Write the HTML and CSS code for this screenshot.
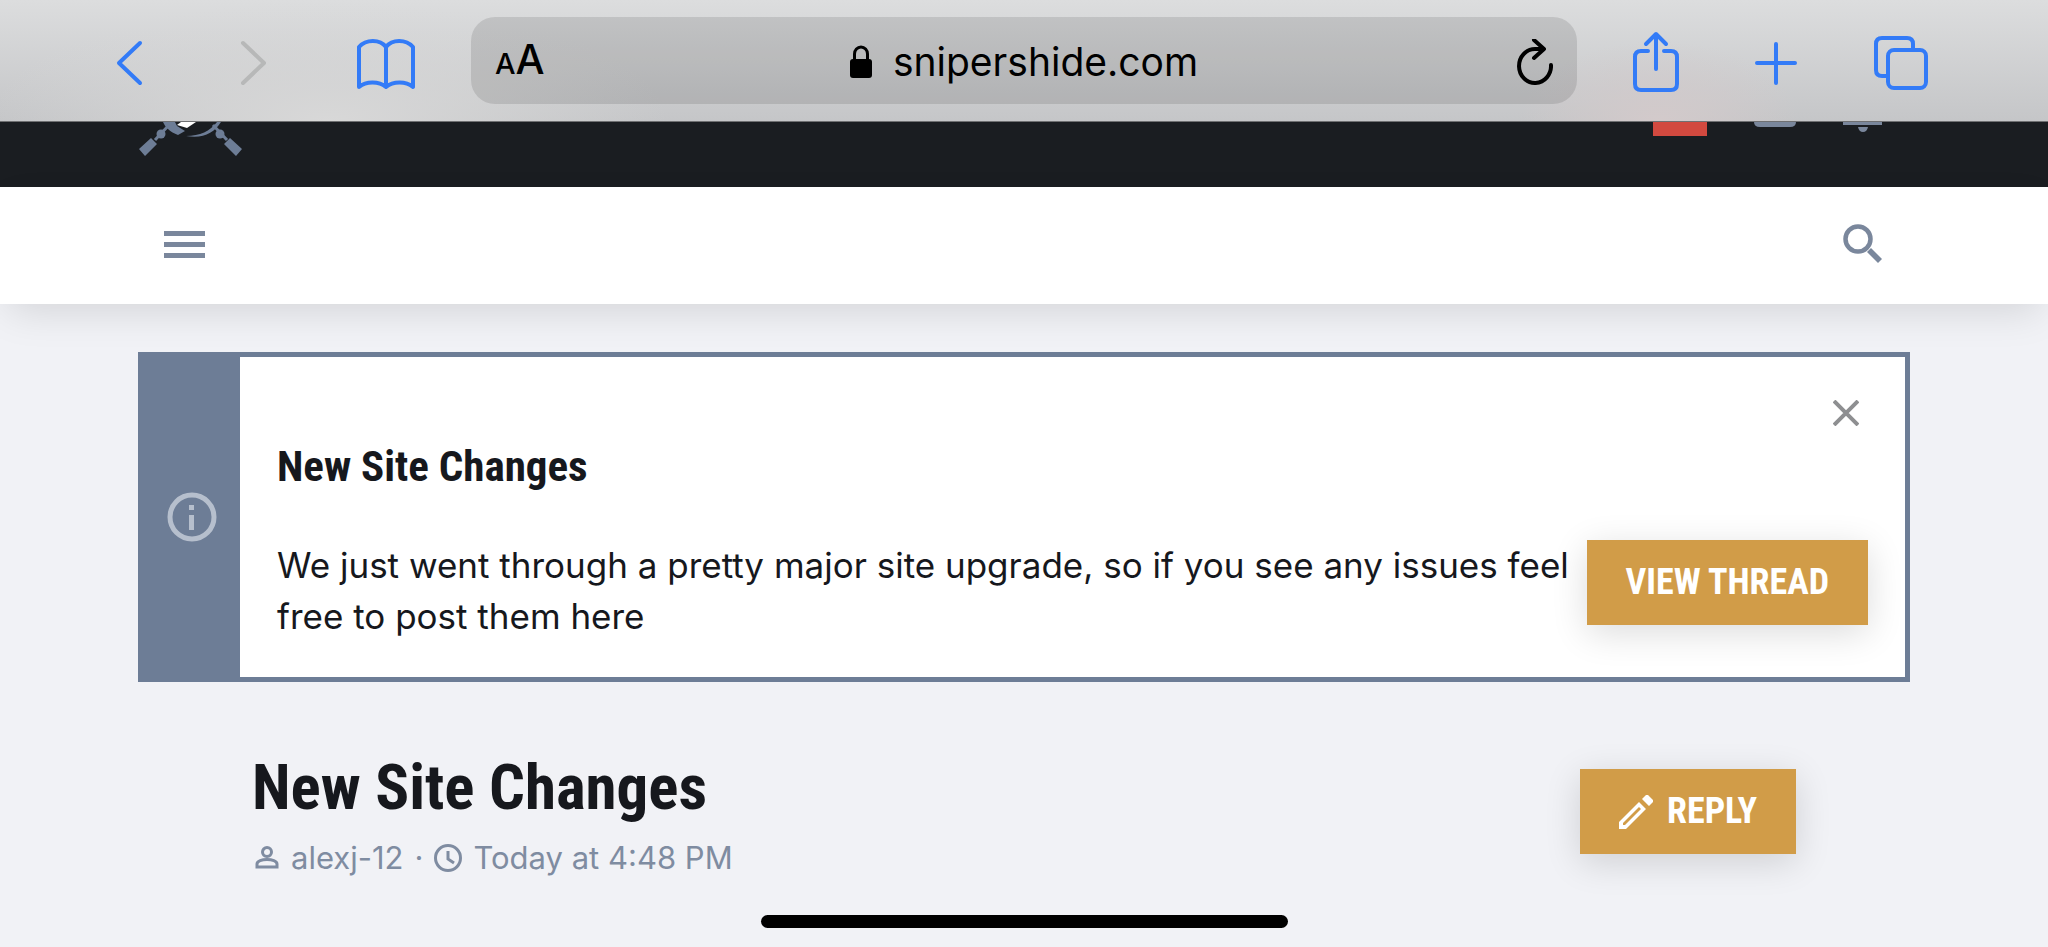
FILE: index.html
```html
<!DOCTYPE html>
<html lang="en">
<head>
	<meta charset="utf-8">
	<meta name="viewport" content="width=device-width, initial-scale=1">
	<title>New Site Changes | Sniper's Hide Forum</title>
	<link rel="stylesheet" href="styles.css">
</head>
<body>
	<!-- Browser toolbar -->
	<div class="toolbar">
		<div class="toolbar-nav">
			<button type="button" class="tool" aria-label="Back">
				<svg width="48" height="64" viewBox="0 0 48 64"><path d="M36 12L15 32l21 20" /></svg>
			</button>
			<button type="button" class="tool" aria-label="Forward" disabled>
				<svg width="48" height="64" viewBox="0 0 48 64"><path d="M13 12l21 20-21 20" /></svg>
			</button>
			<button type="button" class="tool" aria-label="Bookmarks">
				<svg width="60" height="64" viewBox="0 0 60 64"><path d="M30 16v40M30 16c-6-8-20-8-27 0v40c7-6 20-6 27 0c7-6 20-6 27 0V16c-7-8-21-8-27 0z" /></svg>
			</button>
		</div>
		<div class="address">
			<button type="button" class="text-size" aria-label="Text size"><span class="small">A</span><span>A</span></button>
			<label class="url">
				<svg width="22" height="34" viewBox="0 0 22 34" role="img" aria-label="Secure"><rect y="14" width="22" height="19" rx="3" /><path d="M4.500 15V9a6.500 7 0 0 1 13 0v6" fill="none" stroke="#000" stroke-width="3" /></svg>
				<input type="text" value="snipershide.com" aria-label="Address">
			</label>
			<button type="button" class="reload" aria-label="Reload">
				<svg width="36" height="46" viewBox="0 0 36 46"><path d="M34 26a16 17 0 1 1-16-16h8M17 1l10 9-10 9" /></svg>
			</button>
		</div>
		<div class="toolbar-actions">
			<button type="button" class="tool" aria-label="Share">
				<svg width="64" height="64" viewBox="0 0 64 64"><path d="M24 20h-7q-6 0-6 6v27q0 6 6 6h30q6 0 6-6V26q0-6-6-6h-7M32 38V4M22 13L32 3l10 10" /></svg>
			</button>
			<button type="button" class="tool" aria-label="New tab">
				<svg width="64" height="64" viewBox="0 0 64 64"><path d="M30 13v39M11 32h38" /></svg>
			</button>
			<button type="button" class="tool" aria-label="Tabs">
				<svg width="64" height="64" viewBox="0 0 64 64"><path d="M19 45h-5q-6 0-6-6V13q0-6 6-6h25q6 0 6 6v6" /><rect x="20" y="19" width="38" height="38" rx="6" /></svg>
			</button>
		</div>
	</div>

	<!-- Site header, scrolled partly under the toolbar -->
	<header class="header">
		<a href="#" class="logo" aria-label="Sniper's Hide">
			<svg width="104" height="36" viewBox="0 0 104 36">
				<path d="M24 0h12l2 4 8 5-7 4C31 10 26 5 24 0z" />
				<path d="M30 3L16 18M74 3l14 15" stroke="#6d7d96" stroke-width="3" />
				<path d="M82 0C75 11 64 17 47 14c14 0 24-5 31-14z" />
				<circle cx="22" cy="12" r="4.500" /><circle cx="81" cy="12" r="4.500" />
				<path d="M12 16l6 6L6 34l-6-7zM91 16l-6 6 12 12 6-7z" />
				<path d="M38 3l4-3h15l-9 6z" fill="#fff" />
			</svg>
		</a>
		<div class="header-user">
			<a href="#" class="avatar" aria-label="Account"></a>
			<a href="#" aria-label="Inbox"><svg width="42" height="10" viewBox="0 0 42 10"><path d="M0 0h42q0 5-6 5H6q-6 0-6-5z" /></svg></a>
			<a href="#" aria-label="Alerts"><svg width="40" height="10" viewBox="0 0 40 10"><path d="M0 0h39v3H0zM15 5h10q-1 5-5 5t-5-5z" /></svg></a>
		</div>
	</header>

	<nav class="nav">
		<button type="button" class="nav-button" aria-label="Menu">
			<svg width="42" height="43" viewBox="0 0 42 43"><path d="M0 7h41v5H0zM0 18h41v5H0zM0 29h41v5H0z" /></svg>
		</button>
		<button type="button" class="nav-button" aria-label="Search">
			<svg width="42" height="43" viewBox="0 0 42 43"><circle cx="16" cy="15" r="12.500" fill="none" stroke="#7a879c" stroke-width="4.500" /><path d="M25 28l4-4 11 11-4 4z" /></svg>
		</button>
	</nav>

	<main>
		<section class="notice">
			<div class="notice-icon">
				<svg width="50" height="50" viewBox="0 0 50 50"><circle cx="25" cy="25" r="22" fill="none" stroke="#b6bfcd" stroke-width="5" /><path d="M22 13h5v5h-5zM22 23h5v15h-5z" /></svg>
			</div>
			<div class="notice-content">
				<button type="button" class="dismiss" aria-label="Dismiss notice">
					<svg width="26" height="26" viewBox="0 0 26 26"><path d="M1 1l24 24M25 1L1 25" /></svg>
				</button>
				<h3>New Site Changes</h3>
				<div class="notice-row">
					<p>We just went through a pretty major site upgrade, so if you see any issues feel free to post them here</p>
					<a href="#" class="button">VIEW THREAD</a>
				</div>
			</div>
		</section>

		<div class="thread">
			<div class="thread-title">
				<h1>New Site Changes</h1>
				<div class="meta">
					<svg width="28" height="28" viewBox="0 0 28 28"><circle cx="15" cy="8" r="4.500" /><path d="M5 23v-3c0-6 20-6 20 0v3z" /></svg>
					<a href="#">alexj-12</a>
					<span>·</span>
					<svg width="28" height="28" viewBox="0 0 28 28"><circle cx="14" cy="14" r="12.500" /><path d="M14 7v8l6 4" /></svg>
					<a href="#"><time>Today at 4:48 PM</time></a>
				</div>
			</div>
			<a href="#" class="button">
				<svg width="34" height="34" viewBox="0 0 34 34"><path fill-rule="evenodd" d="M0 27v7h7l20-20-7-7zM4 28L20 12l2 2L6 30H4zM23 4l4-4q1-1 2 0l5 5q1 1 0 2l-4 4z" /></svg>
				REPLY
			</a>
		</div>
	</main>

	<div class="home-bar"></div>
</body>
</html>
```

FILE: styles.css
```css
* { box-sizing: border-box; }
body { display: flex; flex-direction: column; min-height: 100vh; margin: 0; background: #f1f2f6; color: #16181d; font: 35px/51px Inter, "Open Sans", sans-serif; }
h1, h3, p { margin: 0; }
h1, h3, .button { font-family: "Roboto Condensed", "Liberation Sans Narrow", Roboto, sans-serif; font-weight: bold; }
a { color: inherit; text-decoration: none; }
button { padding: 0; border: 0; background: none; color: inherit; font: inherit; }
svg { display: block; flex: none; }

/* browser toolbar */
.toolbar { display: flex; align-items: center; height: 122px; padding: 0 116px 0 104px; border-bottom: 1px solid #6f7072; background: radial-gradient(ellipse 340px 120px at 16% 100%, #d8d8d8, transparent), radial-gradient(ellipse 140px 80px at 81% 100%, #d3cacb, transparent), linear-gradient(#dcddde, #c5c6c8); }
.toolbar-nav { display: flex; gap: 78px; margin-right: 55px; }
.toolbar-actions { display: flex; gap: 58px; margin-left: 47px; }
.tool { padding-top: 4px; }
.tool svg { fill: none; stroke: #337bf7; stroke-width: 4; stroke-linecap: round; stroke-linejoin: round; }
.tool:disabled svg { stroke: #b7b8b8; }
.address { display: grid; grid-template-columns: 1fr auto 1fr; align-items: center; flex: 1; height: 87px; padding: 2px 24px 0; border-radius: 24px; background: rgba(0, 0, 0, .11); color: #000; }
.text-size { justify-self: start; font-size: 41px; font-weight: 500; }
.text-size .small { font-size: 29px; }
.url { display: flex; align-items: center; gap: 21px; }
.url input { field-sizing: content; padding: 0; border: 0; background: none; color: #000; font: 39px/52px Inter, "Open Sans", sans-serif; }
.reload { justify-self: end; }
.reload svg { fill: none; stroke: #000; stroke-width: 4; stroke-linecap: round; stroke-linejoin: round; }

/* site header */
.header { display: flex; justify-content: space-between; height: 65px; padding: 0 165px 0 139px; background: #1a1d21; }
.logo { fill: #6d7d96; }
.header-user { display: flex; gap: 47px; fill: #7a879c; }
.avatar { width: 54px; height: 14px; background: #d2493f; }

.nav { position: relative; display: flex; align-items: center; justify-content: space-between; height: 117px; padding: 0 164px; background: #fff; box-shadow: 0 14px 40px -8px rgba(0, 0, 0, .13); }
.nav-button svg { fill: #7a879c; }

/* notice */
main { padding: 48px 138px 0; }
.notice { display: flex; border: 5px solid #6d7d96; background: #fff; }
.notice-icon { display: flex; align-items: center; justify-content: center; width: 97px; background: #6d7d96; fill: #b6bfcd; }
.notice-content { display: flex; flex: 1; flex-direction: column; padding: 35px 37px; }
.dismiss { display: flex; align-items: center; justify-content: center; align-self: flex-end; width: 44px; height: 42px; }
.dismiss svg { stroke: #8e8f91; stroke-width: 4; }
.notice h3 { margin: 6px 0 48px; font-size: 43px; line-height: 52px; }
.notice-row { display: flex; align-items: flex-start; gap: 16px; }
.notice-row p { flex: 1; }

.button { display: flex; align-items: center; gap: 14px; height: 85px; padding: 0 39px; background: #d19c48; color: #fff; font-size: 36px; white-space: nowrap; box-shadow: 0 8px 36px rgba(0, 0, 0, .14); }
.button svg { fill: #fff; }

/* thread */
.thread { display: flex; align-items: flex-start; justify-content: space-between; margin-top: 66px; padding: 0 114px; }
.thread .button { margin-top: 21px; }
h1 { font-size: 63px; line-height: 80px; }
.meta { display: flex; align-items: center; gap: 11px; color: #7f8ca1; font-size: 31px; line-height: 60px; }
.meta svg { fill: none; stroke: #7f8ca1; stroke-width: 3; }

.home-bar { width: 527px; height: 13px; margin: auto auto 19px; border-radius: 7px; background: #000; }
```
